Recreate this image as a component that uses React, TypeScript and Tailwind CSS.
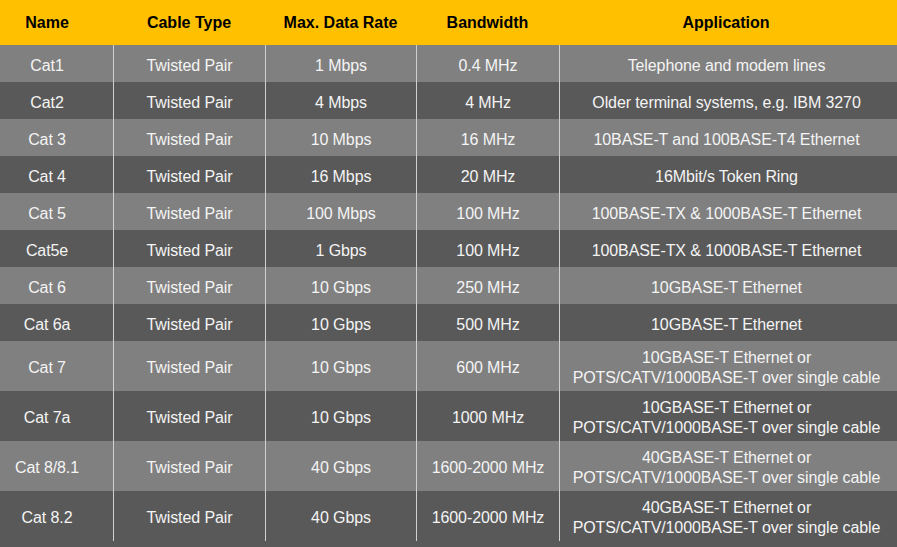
import React from "react";

type Row = { name: string; type: string; rate: string; bw: string; app: string[] };

const rows: Row[] = [
  { name: "Cat1", type: "Twisted Pair", rate: "1 Mbps", bw: "0.4 MHz", app: ["Telephone and modem lines"] },
  { name: "Cat2", type: "Twisted Pair", rate: "4 Mbps", bw: "4 MHz", app: ["Older terminal systems, e.g. IBM 3270"] },
  { name: "Cat 3", type: "Twisted Pair", rate: "10 Mbps", bw: "16 MHz", app: ["10BASE-T and 100BASE-T4 Ethernet"] },
  { name: "Cat 4", type: "Twisted Pair", rate: "16 Mbps", bw: "20 MHz", app: ["16Mbit/s Token Ring"] },
  { name: "Cat 5", type: "Twisted Pair", rate: "100 Mbps", bw: "100 MHz", app: ["100BASE-TX & 1000BASE-T Ethernet"] },
  { name: "Cat5e", type: "Twisted Pair", rate: "1 Gbps", bw: "100 MHz", app: ["100BASE-TX & 1000BASE-T Ethernet"] },
  { name: "Cat 6", type: "Twisted Pair", rate: "10 Gbps", bw: "250 MHz", app: ["10GBASE-T Ethernet"] },
  { name: "Cat 6a", type: "Twisted Pair", rate: "10 Gbps", bw: "500 MHz", app: ["10GBASE-T Ethernet"] },
  { name: "Cat 7", type: "Twisted Pair", rate: "10 Gbps", bw: "600 MHz", app: ["10GBASE-T Ethernet or", "POTS/CATV/1000BASE-T over single cable"] },
  { name: "Cat 7a", type: "Twisted Pair", rate: "10 Gbps", bw: "1000 MHz", app: ["10GBASE-T Ethernet or", "POTS/CATV/1000BASE-T over single cable"] },
  { name: "Cat 8/8.1", type: "Twisted Pair", rate: "40 Gbps", bw: "1600-2000 MHz", app: ["40GBASE-T Ethernet or", "POTS/CATV/1000BASE-T over single cable"] },
  { name: "Cat 8.2", type: "Twisted Pair", rate: "40 Gbps", bw: "1600-2000 MHz", app: ["40GBASE-T Ethernet or", "POTS/CATV/1000BASE-T over single cable"] },
];

const cols = "grid grid-cols-[113px_152px_151px_143px_1fr]";

export default function App() {
  return (
    <div
      className="w-[897px] h-[547px] bg-[#595959] overflow-hidden text-[16px]"
      style={{ fontFamily: '"Liberation Sans", Arial, sans-serif' }}
    >
      <div className={`${cols} h-[45px] bg-[#ffc000] text-black font-bold`}>
        <div className="flex items-center justify-center pr-[19px]">Name</div>
        <div className="flex items-center justify-center">Cable Type</div>
        <div className="flex items-center justify-center">Max. Data Rate</div>
        <div className="flex items-center justify-center">Bandwidth</div>
        <div className="flex items-center justify-center pr-[4px]">Application</div>
      </div>
      {rows.map((r, i) => {
        const tall = r.app.length > 1;
        const bg = i % 2 === 0 ? "bg-[#808080]" : "bg-[#595959]";
        return (
          <div
            key={r.name}
            className={`${cols} ${bg} ${tall ? "h-[50px]" : "h-[37px]"} text-[#f4f4f4] leading-[20px] tracking-[-0.1px]`}
          >
            <div className="flex items-center justify-center pr-[19px] pt-[4px]">{r.name}</div>
            <div className="flex items-center justify-center border-l border-[#d0d0d0] pt-[4px]">{r.type}</div>
            <div className="flex items-center justify-center border-l border-[#d0d0d0] pt-[4px]">{r.rate}</div>
            <div className="flex items-center justify-center border-l border-[#d0d0d0] pt-[4px]">{r.bw}</div>
            <div className="flex flex-col items-center justify-center border-l border-[#d0d0d0] text-center pr-[4px] pt-[4px]">
              {r.app.map((a) => (
                <div key={a}>{a}</div>
              ))}
            </div>
          </div>
        );
      })}
    </div>
  );
}
